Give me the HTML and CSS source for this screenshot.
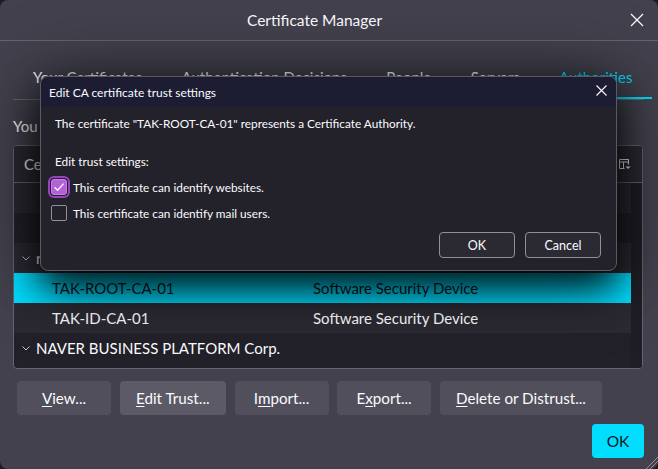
FILE: index.html
```html
<!DOCTYPE html>
<html lang="en">
<head>
<meta charset="utf-8">
<title>Certificate Manager</title>
<link rel="stylesheet" href="styles.css">
</head>
<body>
<div class="window">
  <header class="titlebar">
    <h1 class="title">Certificate Manager</h1>
    <button class="win-close" aria-label="Close">
      <svg width="14" height="14" viewBox="0 0 14 14"><path d="M1 1L13 13M13 1L1 13" stroke="#fbfbfe" stroke-width="1.2" fill="none"/></svg>
    </button>
  </header>
  <main class="content">
    <nav class="tabs">
      <div class="tab">Your Certificates</div>
      <div class="tab">Authentication Decisions</div>
      <div class="tab">People</div>
      <div class="tab">Servers</div>
      <div class="tab active">Authorities</div>
    </nav>
    <p class="desc">You have certificates on file that identify these certificate authorities</p>
    <div class="tree">
      <div class="tree-head">
        <div class="col-name">Certificate Name</div>
        <div class="col-dev">Security Device</div>
        <div class="col-pick">
          <svg width="12" height="11" viewBox="0 0 12 11"><path d="M9.5 5.5V0.5H0.5V9.5H5.5M0.5 3H9.5M4.5 3V9.5" stroke="#fbfbfe" stroke-width="1" fill="none"/><path d="M6.5 7.5H11.5L9 10Z" fill="#fbfbfe"/></svg>
        </div>
      </div>
      <div class="tree-body">
        <div class="rows">
          <div class="row"><span class="cell-name">Microsec e-Szigno Root CA 2009</span><span class="cell-dev">Builtin Object Token</span></div>
          <div class="row alt"><span class="cell-name">e-Szigno Root CA 2017</span><span class="cell-dev">Builtin Object Token</span></div>
          <div class="row group"><svg class="chev" width="8" height="5" viewBox="0 0 8 5"><path d="M0.5 0.5L4 4L7.5 0.5" stroke="#c9c8cf" stroke-width="1" fill="none"/></svg><span class="cell-group">rnd</span></div>
          <div class="row selected"><span class="cell-name">TAK-ROOT-CA-01</span><span class="cell-dev">Software Security Device</span></div>
          <div class="row"><span class="cell-name">TAK-ID-CA-01</span><span class="cell-dev">Software Security Device</span></div>
          <div class="row group alt"><svg class="chev" width="8" height="5" viewBox="0 0 8 5"><path d="M0.5 0.5L4 4L7.5 0.5" stroke="#c9c8cf" stroke-width="1" fill="none"/></svg><span class="cell-group">NAVER BUSINESS PLATFORM Corp.</span></div>
        </div>
        <div class="scroll-track"></div>
      </div>
    </div>
    <div class="actions">
      <button class="btn"><u>V</u>iew...</button>
      <button class="btn hover"><u>E</u>dit Trust...</button>
      <button class="btn">I<u>m</u>port...</button>
      <button class="btn">E<u>x</u>port...</button>
      <button class="btn"><u>D</u>elete or Distrust...</button>
    </div>
    <div class="footer">
      <button class="btn primary">OK</button>
    </div>
  </main>

  <section class="dialog" role="dialog">
    <div class="dlg-head">
      <span class="dlg-title">Edit CA certificate trust settings</span>
      <button class="dlg-close" aria-label="Close">
        <svg width="11" height="11" viewBox="0 0 11 11"><path d="M0.5 0.5L10.5 10.5M10.5 0.5L0.5 10.5" stroke="#fbfbfe" stroke-width="1.1" fill="none"/></svg>
      </button>
    </div>
    <div class="dlg-body">
      <p class="dlg-text">The certificate &quot;TAK-ROOT-CA-01&quot; represents a Certificate Authority.</p>
      <p class="dlg-text dlg-sub">Edit trust settings:</p>
      <label class="check first">
        <span class="box checked">
          <svg width="14" height="14" viewBox="0 0 14 14"><path d="M2.5 7.2L5.6 10.2L11.6 3.6" stroke="#ffffff" stroke-width="1.3" fill="none"/></svg>
        </span>
        <span class="check-label">This certificate can identify websites.</span>
      </label>
      <label class="check">
        <span class="box"></span>
        <span class="check-label">This certificate can identify mail users.</span>
      </label>
      <div class="dlg-actions">
        <button class="dbtn">OK</button>
        <button class="dbtn">Cancel</button>
      </div>
    </div>
  </section>

  <svg class="grip" width="13" height="13" viewBox="0 0 13 13"><path d="M13 1L1 13M13 5L5 13M13 9L9 13" stroke="#8f8f9d" stroke-width="1" fill="none"/></svg>
</div>
</body>
</html>
```

FILE: styles.css
```css
* { box-sizing: border-box; }
html, body { margin: 0; padding: 0; }
body {
  background: #1c1b22;
  width: 658px;
  height: 469px;
  overflow: hidden;
  font-family: "Segoe UI", Lato, "Open Sans", sans-serif;
  color: #fbfbfe;
}
button { font-family: inherit; color: inherit; }

.window {
  position: relative;
  width: 658px;
  height: 469px;
  background: #42414d;
  border-radius: 8px;
  overflow: hidden;
  display: flex;
  flex-direction: column;
}

.titlebar {
  flex: none;
  height: 41px;
  border-bottom: 1px solid #66656f;
  display: flex;
  align-items: center;
}
.title {
  flex: 1;
  margin: 0;
  text-align: center;
  font-size: 15.5px;
  font-weight: 400;
  line-height: 20px;
}
.win-close {
  flex: none;
  width: 14px;
  height: 14px;
  margin: 0 14px 0 1px;
  padding: 0;
  border: 0;
  background: none;
  display: flex;
}

.content {
  flex: 1;
  display: flex;
  flex-direction: column;
  padding: 0 14px 0 13px;
}

.tabs {
  flex: none;
  height: 59px;
  display: flex;
  align-items: flex-end;
  border-bottom: 1px solid #66656f;
  font-size: 15px;
}
.tab { padding: 0 19.5px 12px 20px; line-height: 20px; white-space: nowrap; }
.tab.active { color: #00ddff; box-shadow: inset 0 -2px #00ddff; flex: 1; }

.desc {
  margin: 16px 0 9px;
  font-size: 15px;
  line-height: 20px;
  white-space: nowrap;
}

.tree {
  flex: none;
  height: 224px;
  margin-right: 1px;
  border: 1px solid #66656f;
  border-radius: 4px;
  background: #222129;
  display: flex;
  flex-direction: column;
  overflow: hidden;
}
.tree-head {
  flex: none;
  height: 37px;
  display: flex;
  align-items: center;
  background: #2b2a33;
  border-bottom: 1px solid #66656f;
  font-size: 15px;
}
.col-name { width: 299px; padding-left: 10px; }
.col-dev { flex: 1; }
.col-pick { width: 30px; display: flex; justify-content: center; padding-right: 4px; }

.tree-body { flex: 1; display: flex; overflow: hidden; }
.rows { flex: 1; }
.scroll-track { width: 11px; background: #1f1e25; }
.row {
  height: 30px;
  display: flex;
  align-items: center;
  font-size: 15px;
  white-space: nowrap;
  background: #2b2a33;
}
.row.alt { background: #222129; }
.cell-name { width: 299px; padding-left: 38px; overflow: hidden; }
.cell-dev { flex: 1; }
.chev { margin-left: 8px; margin-right: 6px; }
.row.selected {
  background: #00ddff;
  color: #15141a;
}

.actions {
  flex: none;
  margin-top: 12px;
  padding-left: 4px;
  display: flex;
  gap: 8.5px;
}
.btn {
  height: 34px;
  min-width: 94px;
  padding: 0 16.5px;
  border: 0;
  border-radius: 4px;
  background: #504f5b;
  font-size: 15.2px;
  white-space: nowrap;
}
.btn u { text-underline-offset: 2px; }
.btn.hover { background: #5b5a66; }
.footer { flex: none; margin-top: 9px; display: flex; justify-content: flex-end; }
.btn.primary {
  min-width: 0;
  width: 52px;
  padding: 0;
  background: #00ddff;
  color: #15141a;
  font-size: 15.5px;
}

.dialog {
  position: absolute;
  z-index: 2;
  left: 40px;
  top: 76px;
  width: 577px;
  border: 1px solid #5b5a64;
  border-radius: 8px;
  background: #23222b;
  overflow: hidden;
  box-shadow: 0 16px 36px rgba(0, 0, 0, 0.85), 0 4px 70px rgba(0, 0, 0, 0.55);
}
.dlg-head {
  height: 30px;
  background: #1c1d33;
  display: flex;
  align-items: center;
  padding-left: 8px;
  position: relative;
}
.dlg-title { font-size: 12px; }
.dlg-close {
  position: absolute;
  right: 9px;
  top: 8px;
  width: 11px;
  height: 11px;
  padding: 0;
  border: 0;
  background: none;
  display: flex;
}
.dlg-body { padding: 8px 15px 12px 10px; font-size: 11.8px; }
.dlg-text { margin: 0 0 0 4px; line-height: 18px; white-space: nowrap; }
.dlg-sub { margin-top: 20px; }
.check { display: flex; align-items: center; height: 24px; margin-top: 2px; }
.check.first { margin-top: 4px; }
.box {
  width: 16px;
  height: 16px;
  border: 1px solid #8f8f9d;
  border-radius: 2px;
  margin-right: 6px;
  display: flex;
  align-items: center;
  justify-content: center;
  flex: none;
}
.box.checked {
  background: #b360d9;
  border-color: #c680e6;
  outline: 2px solid #9a41c2;
  outline-offset: 1px;
  border-radius: 3px;
}
.dlg-actions { display: flex; justify-content: flex-end; gap: 10px; margin-top: 7px; }
.dbtn {
  width: 76px;
  height: 26px;
  border: 1px solid #8f8f9d;
  border-radius: 4px;
  background: #2b2a33;
  font-size: 12.5px;
  padding: 0;
}

.grip { position: absolute; right: 0; bottom: 0; }
```
